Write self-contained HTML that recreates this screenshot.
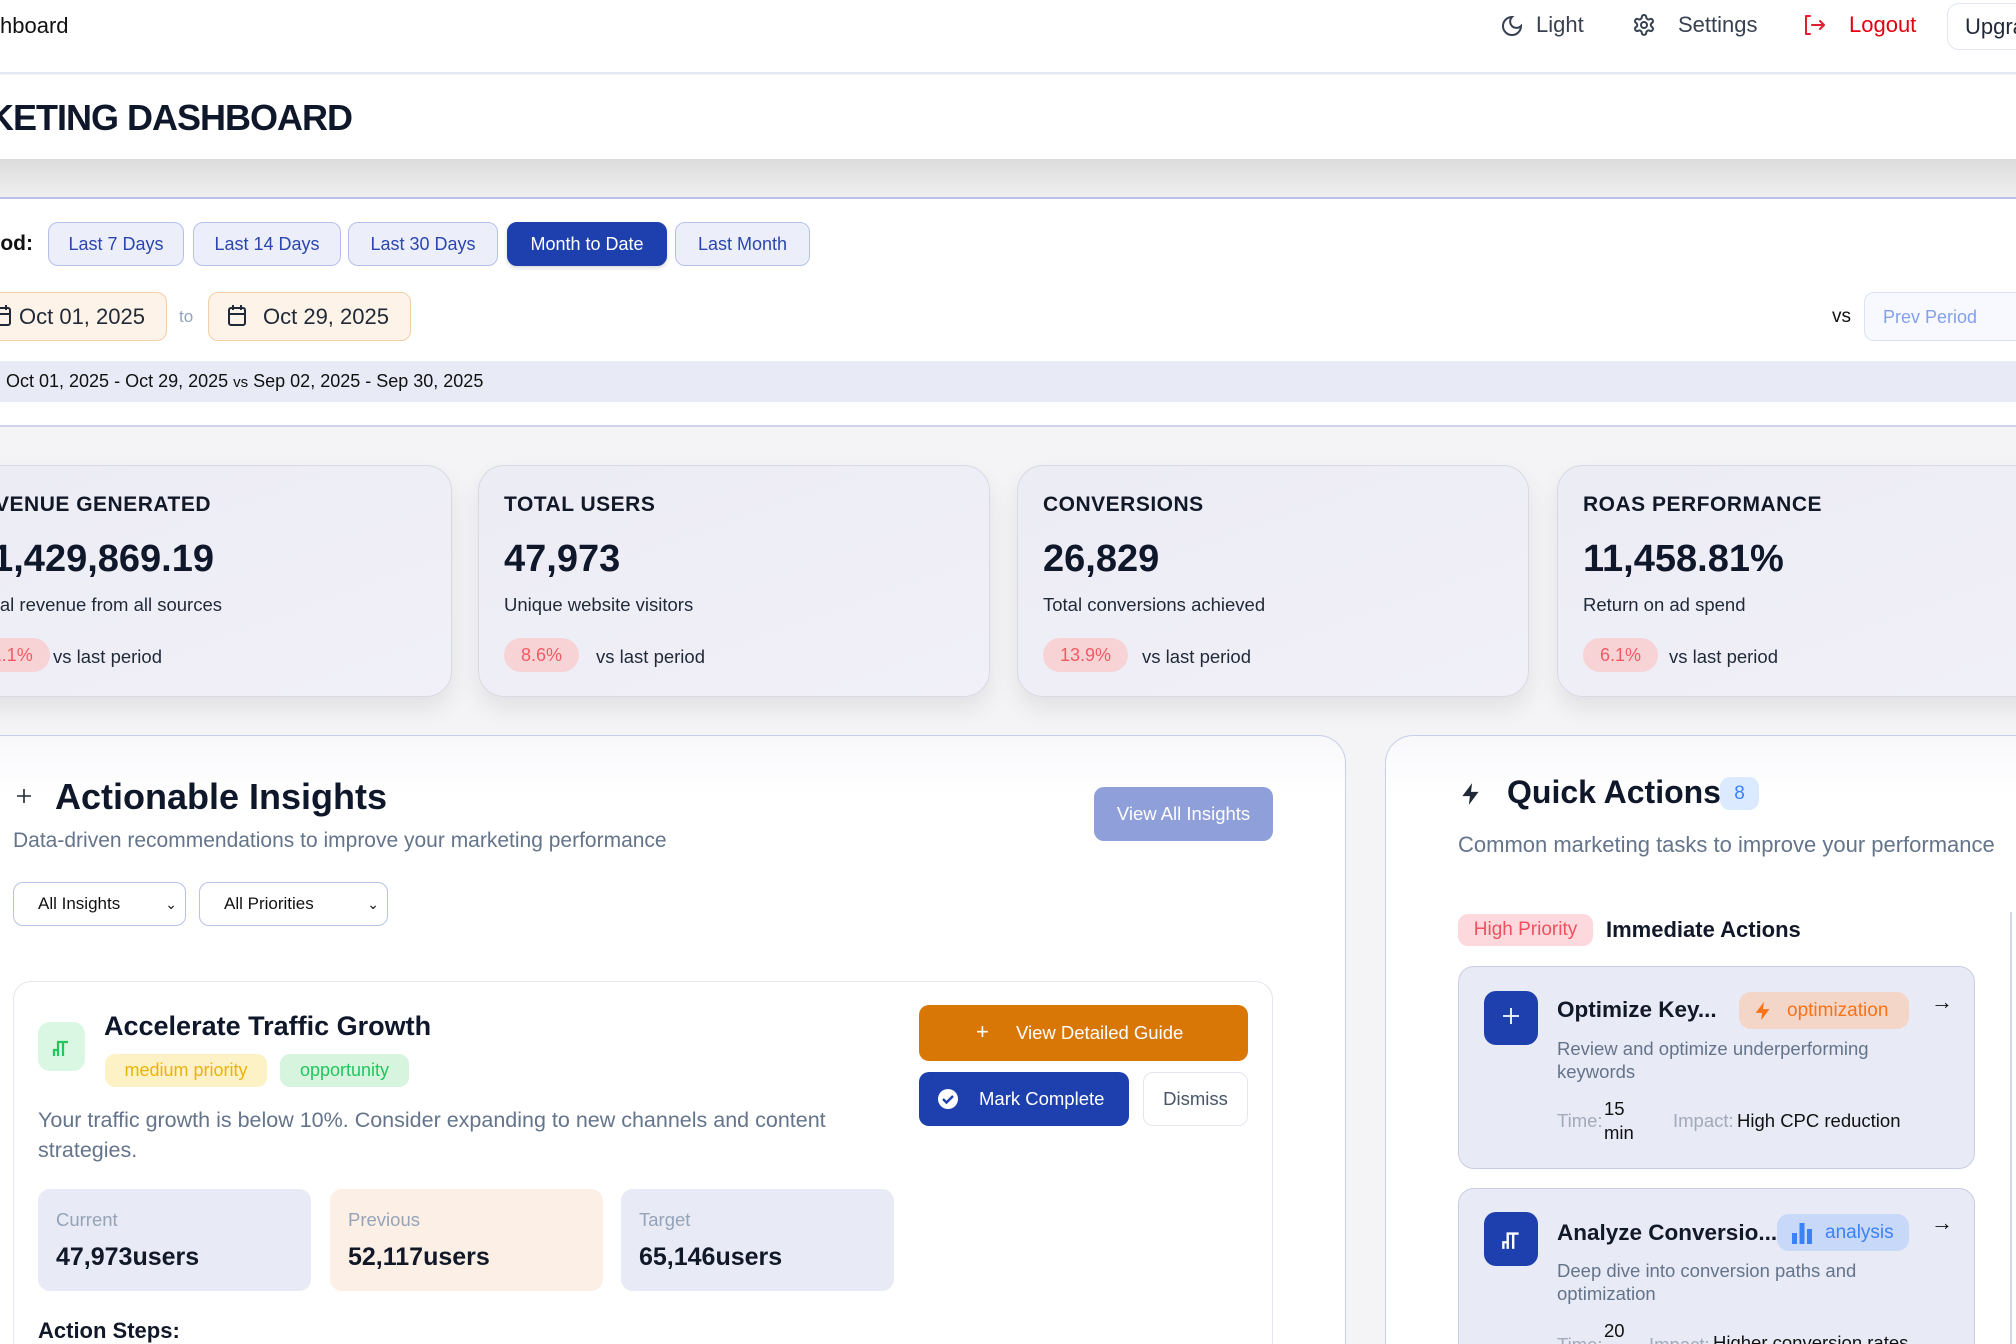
<!DOCTYPE html>
<html><head><meta charset="utf-8"><style>
*{box-sizing:border-box;margin:0;padding:0}
html{width:2016px;height:1344px;overflow:hidden}
body{width:2016px;height:1344px;overflow:hidden;background:#f4f4f6;font-family:"Liberation Sans",sans-serif;color:#0f172a;position:relative}
.a{position:absolute;white-space:nowrap}
.nav{position:absolute;left:0;top:0;width:2016px;height:74px;background:#fff;border-bottom:2px solid #e5e9f2}
.title{position:absolute;left:0;top:75px;width:2016px;height:84px;background:#fff}
.band{position:absolute;left:0;top:159px;width:2016px;height:40px;background:linear-gradient(#dcdcdc,#f0f0f0)}
.panel{position:absolute;left:0;top:197px;width:2016px;height:230px;background:#fff;border-top:2px solid #b8c1e8;border-bottom:2px solid #cdd3ea}
.pb{position:absolute;top:222px;height:44px;border:1.5px solid #b7c0ea;background:#eceefa;color:#2c46b0;border-radius:10px;font-size:18px;display:flex;align-items:center;justify-content:center}
.date{position:absolute;top:292px;height:49px;border:1.5px solid #f3cfa6;background:#fdf3e8;border-radius:10px;font-size:22px;display:flex;align-items:center;color:#1f2937}
.card{position:absolute;top:465px;width:512px;height:232px;border:1.5px solid #d9d9e4;border-radius:26px;background:linear-gradient(160deg,#ececf4,#f1f0f9);box-shadow:0 12px 24px rgba(0,0,0,.08)}
.card .t{position:absolute;left:25px;top:27px;font-size:21px;font-weight:600;letter-spacing:.5px;white-space:nowrap;color:#111827}
.card .v{position:absolute;left:25px;top:72px;font-size:38px;font-weight:700;white-space:nowrap;color:#0f172a}
.card .s{position:absolute;left:25px;top:128px;font-size:18.5px;white-space:nowrap;color:#1f2937}
.card .b{position:absolute;left:25px;top:172px;height:34px;padding:0 17px;border-radius:17px;background:#f8d3d6;color:#f25a63;font-size:18px;display:flex;align-items:center}
.card .l{position:absolute;top:180px;font-size:18.5px;color:#1f2937;white-space:nowrap}
.big{position:absolute;top:735px;height:700px;background:#fff;border:1.5px solid #c8cde8;border-radius:28px}
.sel{position:absolute;top:882px;height:44px;border:1.5px solid #b9c2e8;border-radius:10px;background:#fff;font-size:17px;display:flex;align-items:center;padding-left:24px;color:#111}
.stat{position:absolute;top:1189px;width:273px;height:102px;border-radius:12px}
.stat .k{position:absolute;left:18px;top:20px;font-size:18.5px;color:#94a3b8}
.stat .n{position:absolute;left:18px;top:54px;font-size:25px;font-weight:700;color:#111827}
.ac{position:absolute;left:1458px;width:517px;height:203px;background:#e8eaf6;border:1.5px solid #c9cde0;border-radius:16px}
.ic{position:absolute;left:25px;width:54px;height:54px;border-radius:12px;background:#1e40af}
</style></head><body>
<div class="nav"></div>
<div class="a" style="left:0;top:13px;font-size:22px;color:#111">hboard</div>
<svg class="a" style="left:1500px;top:13px" width="24" height="26" viewBox="0 0 24 24" fill="none" stroke="#374151" stroke-width="2" stroke-linecap="round"><path d="M12 3a6 6 0 0 0 9 9 9 9 0 1 1-9-9z"/></svg>
<div class="a" style="left:1536px;top:12px;font-size:22px;color:#374151">Light</div>
<svg class="a" style="left:1632px;top:13px" width="24" height="24" viewBox="0 0 24 24" fill="none" stroke="#374151" stroke-width="2"><circle cx="12" cy="12" r="3"/><path d="M12.2 2h-.4a2 2 0 0 0-2 2v.2a2 2 0 0 1-1 1.7l-.4.3a2 2 0 0 1-2 0l-.2-.1a2 2 0 0 0-2.7.7l-.2.4a2 2 0 0 0 .7 2.7l.2.1a2 2 0 0 1 1 1.7v.5a2 2 0 0 1-1 1.7l-.2.1a2 2 0 0 0-.7 2.7l.2.4a2 2 0 0 0 2.7.7l.2-.1a2 2 0 0 1 2 0l.4.3a2 2 0 0 1 1 1.7v.2a2 2 0 0 0 2 2h.4a2 2 0 0 0 2-2v-.2a2 2 0 0 1 1-1.7l.4-.3a2 2 0 0 1 2 0l.2.1a2 2 0 0 0 2.7-.7l.2-.4a2 2 0 0 0-.7-2.7l-.2-.1a2 2 0 0 1-1-1.7v-.5a2 2 0 0 1 1-1.7l.2-.1a2 2 0 0 0 .7-2.7l-.2-.4a2 2 0 0 0-2.7-.7l-.2.1a2 2 0 0 1-2 0l-.4-.3a2 2 0 0 1-1-1.7V4a2 2 0 0 0-2-2z"/></svg>
<div class="a" style="left:1678px;top:12px;font-size:22px;color:#374151">Settings</div>
<svg class="a" style="left:1802px;top:13px" width="26" height="24" viewBox="0 0 26 24" fill="none" stroke="#e11d2e" stroke-width="2" stroke-linecap="round" stroke-linejoin="round"><path d="M8 3H4v18h4M10 12h12M18 8l4 4-4 4"/></svg>
<div class="a" style="left:1849px;top:12px;font-size:22px;color:#e3000f">Logout</div>
<div class="a" style="left:1947px;top:3px;width:100px;height:47px;border:1.5px solid #e2e6ef;border-radius:12px;background:#fff;font-size:22px;color:#1f2937;padding:10px 0 0 17px">Upgrade</div>
<div class="title"></div>
<div class="a" style="right:1664px;top:97px;font-size:36px;font-weight:700;letter-spacing:-1px;color:#0f172a">MARKETING DASHBOARD</div>
<div class="band"></div>
<div class="panel"></div>
<div class="a" style="right:1983px;top:232px;font-size:21px;font-weight:600;color:#111">Period:</div>
<div class="pb" style="left:48px;width:136px">Last 7 Days</div>
<div class="pb" style="left:193px;width:148px">Last 14 Days</div>
<div class="pb" style="left:348px;width:150px">Last 30 Days</div>
<div class="pb" style="left:507px;width:160px;background:#1e40af;border-color:#1e40af;color:#fff;box-shadow:0 2px 4px rgba(0,0,0,.15)">Month to Date</div>
<div class="pb" style="left:675px;width:135px">Last Month</div>
<div class="date" style="left:-40px;width:207px;padding-left:58px">Oct 01, 2025</div>
<svg class="a" style="left:-8px;top:304px" width="20" height="24" viewBox="0 0 20 24" fill="none" stroke="#1f2937" stroke-width="2"><rect x="2" y="4" width="16" height="17" rx="2"/><path d="M2 10h16M6 1v5M14 1v5"/></svg>
<div class="a" style="left:179px;top:307px;font-size:17px;color:#94a3b8">to</div>
<div class="date" style="left:208px;width:203px;padding-left:54px">Oct 29, 2025</div>
<svg class="a" style="left:226px;top:304px" width="22" height="24" viewBox="0 0 20 24" fill="none" stroke="#1f2937" stroke-width="2"><rect x="2" y="4" width="16" height="17" rx="2"/><path d="M2 10h16M6 1v5M14 1v5"/></svg>
<div class="a" style="left:1832px;top:306px;font-size:19px;color:#111">vs</div>
<div class="a" style="left:1864px;top:292px;width:200px;height:49px;border:1.5px solid #dbe2f5;background:#f7f9ff;border-radius:10px;font-size:18px;color:#84a0ec;padding:14px 0 0 18px">Prev Period <span style="color:#999;margin-left:30px">⌄</span></div>
<div class="a" style="left:0;top:361px;width:2016px;height:41px;background:#e8eaf6"></div>
<div class="a" style="left:6px;top:371px;font-size:18px;color:#111">Oct 01, 2025 - Oct 29, 2025 <span style="font-size:15px">vs</span> Sep 02, 2025 - Sep 30, 2025</div>

<div class="card" style="left:-60px"><div class="t" style="left:auto;right:240px">REVENUE GENERATED</div><div class="v" style="left:auto;right:237px">$1,429,869.19</div><div class="s" style="left:auto;right:229px">Total revenue from all sources</div><div class="b" style="left:25px">11.1%</div><div class="l" style="left:112px">vs last period</div></div>
<div class="card" style="left:478px"><div class="t">TOTAL USERS</div><div class="v">47,973</div><div class="s">Unique website visitors</div><div class="b">8.6%</div><div class="l" style="left:117px">vs last period</div></div>
<div class="card" style="left:1017px"><div class="t">CONVERSIONS</div><div class="v">26,829</div><div class="s">Total conversions achieved</div><div class="b">13.9%</div><div class="l" style="left:124px">vs last period</div></div>
<div class="card" style="left:1557px"><div class="t">ROAS PERFORMANCE</div><div class="v">11,458.81%</div><div class="s">Return on ad spend</div><div class="b">6.1%</div><div class="l" style="left:111px">vs last period</div></div>

<div class="big" style="left:-40px;width:1386px;background:linear-gradient(#f8f8fb,#fff 60px)"></div>
<svg class="a" style="left:15px;top:787px" width="18" height="22" viewBox="0 0 18 22" stroke="#1f2937" stroke-width="1.6"><path d="M9 2v14M2 9h14"/></svg>
<div class="a" style="left:55px;top:776px;font-size:36px;font-weight:700;color:#0f172a">Actionable Insights</div>
<div class="a" style="left:13px;top:829px;font-size:21px;color:#64748b">Data-driven recommendations to improve your marketing performance</div>
<div class="a" style="left:1094px;top:787px;width:179px;height:54px;background:#8f9fd9;border-radius:10px;color:#fff;font-size:18.5px;text-align:center;line-height:54px">View All Insights</div>
<div class="sel" style="left:13px;width:173px">All Insights<span style="position:absolute;right:8px;font-size:14px">⌄</span></div>
<div class="sel" style="left:199px;width:189px">All Priorities<span style="position:absolute;right:8px;font-size:14px">⌄</span></div>

<div class="a" style="left:13px;top:981px;width:1260px;height:450px;border:1.5px solid #e3e6ee;border-radius:18px;background:#fff"></div>
<div class="a" style="left:38px;top:1022px;width:47px;height:49px;border-radius:12px;background:#d9f7e2"></div>
<svg class="a" style="left:50px;top:1036px" width="22" height="22" viewBox="0 0 22 22" fill="none" stroke="#22c55e" stroke-width="2.2"><path d="M4 20v-6h4v6M8 20V6h10"/><path d="M13 6v14"/></svg>
<div class="a" style="left:104px;top:1011px;font-size:27px;font-weight:600;color:#0f172a">Accelerate Traffic Growth</div>
<div class="a" style="left:105px;top:1054px;width:162px;height:33px;border-radius:10px;background:#fdf2c6;color:#eab308;font-size:18px;text-align:center;line-height:33px">medium priority</div>
<div class="a" style="left:280px;top:1054px;width:129px;height:33px;border-radius:10px;background:#d7f5de;color:#22c55e;font-size:18px;text-align:center;line-height:33px">opportunity</div>
<div class="a" style="left:38px;top:1105px;font-size:21.5px;line-height:30px;color:#64748b;white-space:normal;width:860px">Your traffic growth is below 10%. Consider expanding to new channels and content strategies.</div>
<div class="a" style="left:919px;top:1005px;width:329px;height:56px;background:#d97706;border-radius:10px;color:#fff;font-size:18.5px;line-height:56px;padding-left:97px">View Detailed Guide</div>
<div class="a" style="left:976px;top:1019px;color:#fff;font-size:22px">+</div>
<div class="a" style="left:919px;top:1072px;width:210px;height:54px;background:#1e40af;border-radius:10px;color:#fff;font-size:18.5px;line-height:54px;padding-left:60px">Mark Complete</div>
<svg class="a" style="left:937px;top:1088px" width="22" height="22" viewBox="0 0 22 22"><circle cx="11" cy="11" r="10" fill="#fff"/><path d="M6 11l3.5 3.5L16 8" fill="none" stroke="#1e40af" stroke-width="2.4"/></svg>
<div class="a" style="left:1143px;top:1072px;width:105px;height:54px;border:1.5px solid #e3e6ee;border-radius:10px;background:#fff;color:#475569;font-size:18.5px;text-align:center;line-height:51px">Dismiss</div>
<div class="stat" style="left:38px;background:#e8eaf6"><div class="k">Current</div><div class="n">47,973users</div></div>
<div class="stat" style="left:330px;background:#fcf0e6"><div class="k">Previous</div><div class="n">52,117users</div></div>
<div class="stat" style="left:621px;background:#e8eaf6"><div class="k">Target</div><div class="n">65,146users</div></div>
<div class="a" style="left:38px;top:1318px;font-size:22px;font-weight:600;color:#111827">Action Steps:</div>

<div class="big" style="left:1385px;width:700px;background:linear-gradient(#f8f8fb,#fff 60px)"></div>
<div class="a" style="left:2010px;top:912px;width:2px;height:440px;background:#d5d8e4"></div>
<svg class="a" style="left:1458px;top:780px" width="26" height="28" viewBox="0 0 24 24" fill="#1f2937"><path d="M13 2L4 14h7l-1 8 9-12h-7z"/></svg>
<div class="a" style="left:1507px;top:774px;font-size:32px;font-weight:700;color:#0f172a">Quick Actions</div>
<div class="a" style="left:1720px;top:777px;width:39px;height:33px;border-radius:10px;background:#dbeafe;color:#3b82f6;font-size:19px;text-align:center;line-height:33px">8</div>
<div class="a" style="left:1458px;top:832px;font-size:22px;color:#64748b">Common marketing tasks to improve your performance</div>
<div class="a" style="left:1458px;top:914px;width:135px;height:32px;border-radius:10px;background:#fdd8dc;color:#f0505f;font-size:19px;text-align:center;line-height:32px">High Priority</div>
<div class="a" style="left:1606px;top:917px;font-size:22px;font-weight:600;color:#111827">Immediate Actions</div>

<div class="ac" style="top:966px">
 <div class="ic" style="top:24px"></div>
 <svg class="a" style="left:40px;top:38px" width="24" height="26" viewBox="0 0 24 26" stroke="#fff" stroke-width="1.8"><path d="M12 3v16M4 11h16"/></svg>
 <div class="a" style="left:98px;top:30px;font-size:22.5px;font-weight:600;color:#111827">Optimize Key...</div>
 <div class="a" style="left:280px;top:25px;width:170px;height:37px;border-radius:12px;background:#f3d6c8;color:#f97316;font-size:19px;line-height:37px;padding-left:48px">optimization</div>
 <svg class="a" style="left:293px;top:32px" width="22" height="24" viewBox="0 0 24 24" fill="#f97316"><path d="M13 2L4 14h7l-1 8 9-12h-7z"/></svg>
 <div class="a" style="left:472px;top:22px;font-size:22px;color:#111">→</div>
 <div class="a" style="left:98px;top:70px;font-size:18.5px;line-height:23px;color:#64748b;white-space:normal;width:330px">Review and optimize underperforming keywords</div>
 <div class="a" style="left:98px;top:143px;font-size:18.5px;color:#a0aab8">Time:</div>
 <div class="a" style="left:145px;top:130px;font-size:18.5px;line-height:24px;color:#111">15<br>min</div>
 <div class="a" style="left:214px;top:143px;font-size:18.5px;color:#a0aab8">Impact:</div>
 <div class="a" style="left:278px;top:143px;font-size:18.5px;color:#111">High CPC reduction</div>
</div>
<div class="ac" style="top:1188px;height:220px">
 <div class="ic" style="top:23px"></div>
 <svg class="a" style="left:40px;top:38px" width="24" height="24" viewBox="0 0 22 22" fill="none" stroke="#fff" stroke-width="2.2"><path d="M4 20v-6h4v6M8 20V6h10"/><path d="M13 6v14"/></svg>
 <div class="a" style="left:98px;top:31px;font-size:22.5px;font-weight:600;color:#111827">Analyze Conversio...</div>
 <div class="a" style="left:318px;top:25px;width:132px;height:37px;border-radius:12px;background:#c8d8f8;color:#3b82f6;font-size:19px;line-height:37px;padding-left:48px">analysis</div>
 <svg class="a" style="left:332px;top:32px" width="22" height="24" viewBox="0 0 22 24" fill="#3b82f6"><rect x="1" y="12" width="5" height="11"/><rect x="8.5" y="2" width="5" height="21"/><rect x="16" y="8" width="5" height="15"/></svg>
 <div class="a" style="left:472px;top:21px;font-size:22px;color:#111">→</div>
 <div class="a" style="left:98px;top:70px;font-size:18.5px;line-height:23px;color:#64748b;white-space:normal;width:330px">Deep dive into conversion paths and optimization</div>
 <div class="a" style="left:98px;top:145px;font-size:18.5px;color:#a0aab8">Time:</div>
 <div class="a" style="left:145px;top:130px;font-size:18.5px;line-height:24px;color:#111">20<br>min</div>
 <div class="a" style="left:190px;top:145px;font-size:18.5px;color:#a0aab8">Impact:</div>
 <div class="a" style="left:254px;top:143px;font-size:18.5px;color:#111">Higher conversion rates</div>
</div>
</body></html>
